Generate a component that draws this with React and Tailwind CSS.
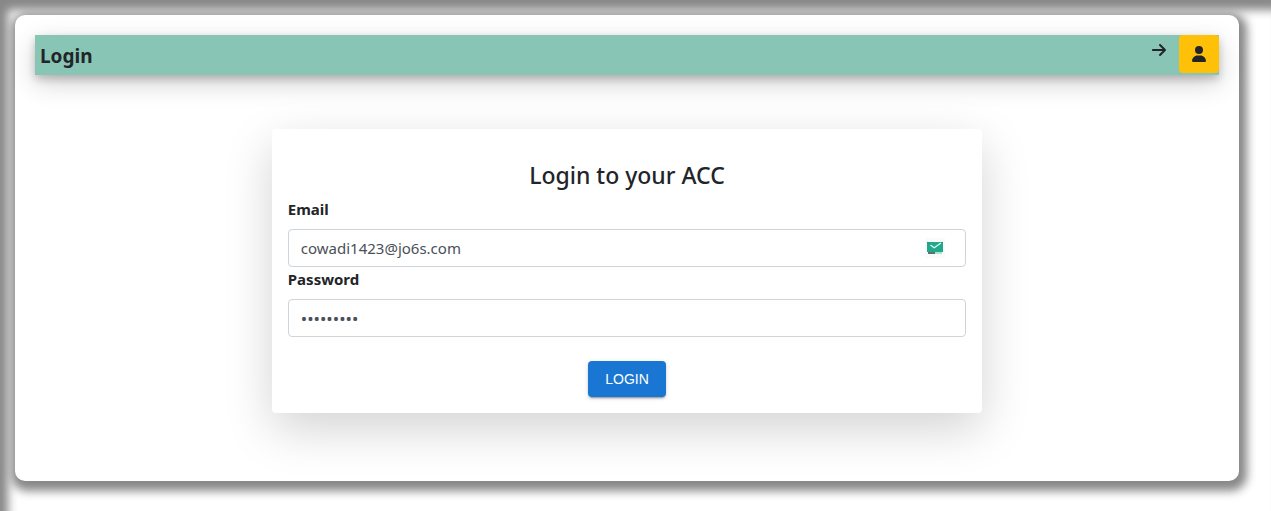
import { FaArrowRight, FaUser } from "react-icons/fa6";

function MailBadge() {
  return (
    <svg viewBox="0 0 20 20" className="h-5 w-5" aria-hidden="true">
      <rect width="20" height="20" rx="1" fill="#fafafa" />
      <rect x="2" y="4" width="16" height="10" fill="#22a98b" />
      <path d="M2 4l8 5.500L18 4" fill="none" stroke="#159074" strokeWidth="0.6" />
      <path d="M5.500 7l3.700 2.800L16 5" fill="none" stroke="#e8fff8" strokeWidth="1.1" />
      <path d="M3 15h7" stroke="#26443f" strokeWidth="1.500" />
      <path d="M10 15h7" stroke="#7fd8c2" strokeWidth="1.3" />
    </svg>
  );
}

const fieldClass =
  "block h-[38px] w-full rounded border border-[#ced4da] bg-white px-3 leading-6 text-[#495057] outline-none";

export default function App() {
  return (
    <div className="min-h-screen bg-white py-[15px] pr-8 pl-[15px] font-['Noto_Sans',sans-serif] text-[#212529] shadow-[inset_8px_10px_10px_#888]">
      <main className="rounded-[10px] bg-white px-5 pt-5 pb-[68px] shadow-[2px_4px_10px_6px_#888]">
        <header className="flex h-10 justify-between bg-[#89c5b5] pl-[5px] shadow-[0_4px_8px_rgba(0,0,0,0.2),0_8px_26px_rgba(0,0,0,0.19)]">
          <h1 className="text-[19px] leading-[42px] font-bold">Login</h1>
          <div className="flex items-start">
            <a href="#next" aria-label="Next" className="mt-[7px] mr-3">
              <FaArrowRight size={16} />
            </a>
            <button
              type="button"
              aria-label="Account"
              className="flex h-[38px] w-10 items-center justify-center rounded bg-[#ffc107]"
            >
              <FaUser size={16} />
            </button>
          </div>
        </header>
        <form
          className="mx-auto mt-[54px] w-3/5 rounded bg-white px-4 pt-8 pb-4 shadow-[0_16px_48px_rgba(0,0,0,0.175)]"
          onSubmit={(e) => e.preventDefault()}
        >
          <h2 className="text-center text-[23px] leading-7 font-medium">Login to your ACC</h2>
          <label htmlFor="email" className="mt-2 mb-2 block text-[15px] leading-6 font-bold">
            Email
          </label>
          <div className="relative">
            <input
              id="email"
              type="email"
              defaultValue="cowadi1423@jo6s.com"
              className={`${fieldClass} text-[15px]`}
            />
            <span className="absolute top-[9px] right-[21px]">
              <MailBadge />
            </span>
          </div>
          <label htmlFor="password" className="mb-2 block text-[15px] leading-6 font-bold">
            Password
          </label>
          <input
            id="password"
            type="password"
            defaultValue="password1"
            className={`${fieldClass} text-[17px]`}
          />
          <button
            type="submit"
            className="mx-auto mt-6 block h-9 rounded bg-[#1976d2] px-[17px] font-['Liberation_Sans',sans-serif] text-sm text-white shadow-[0_3px_1px_-2px_rgba(0,0,0,0.2),0_2px_2px_rgba(0,0,0,0.14),0_1px_5px_rgba(0,0,0,0.12)]"
          >
            LOGIN
          </button>
        </form>
      </main>
    </div>
  );
}
